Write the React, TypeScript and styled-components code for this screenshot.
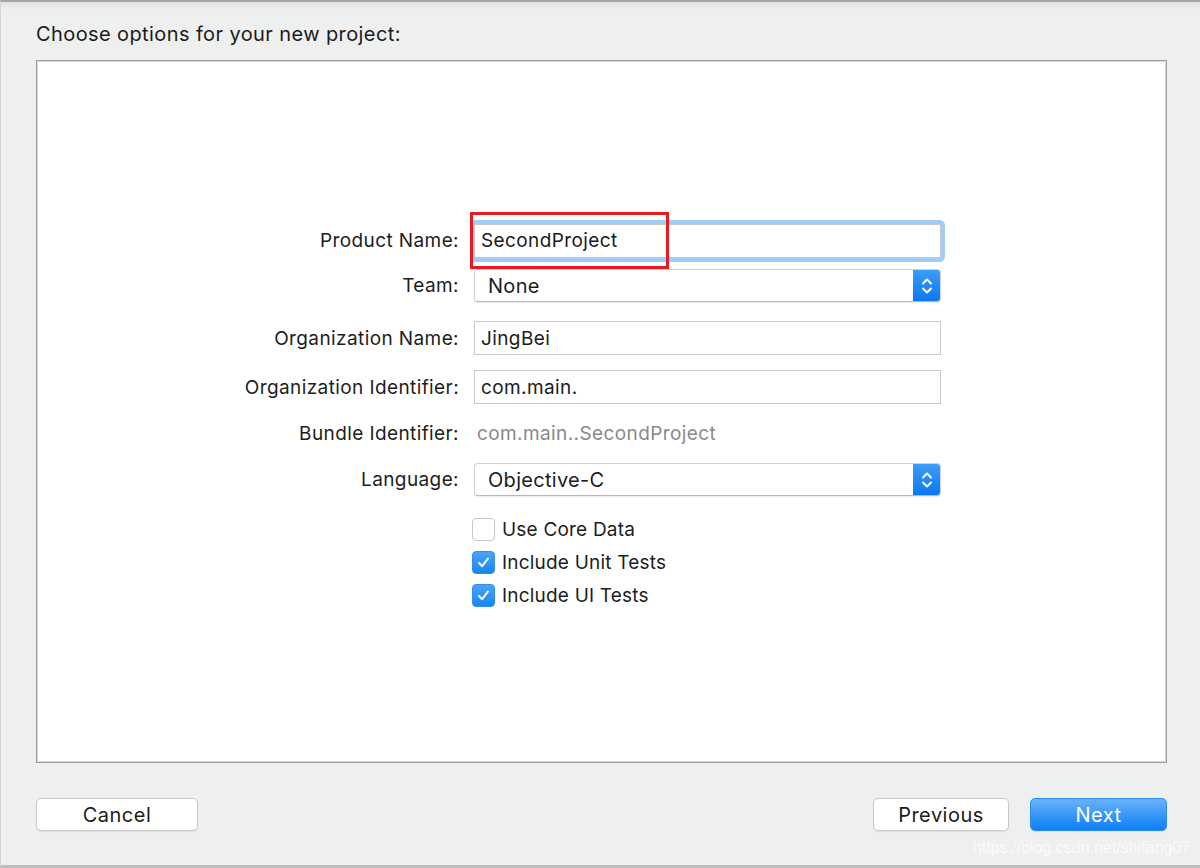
import styled, { createGlobalStyle } from 'styled-components';

const GlobalStyle = createGlobalStyle`
  html, body {
    margin: 0;
    padding: 0;
    background: #eeefef;
  }
  body {
    font-family: Inter, "Liberation Sans", Arial, sans-serif;
    color: #1b1b1b;
    -webkit-font-smoothing: antialiased;
  }
`;

const Window = styled.div`
  position: relative;
  width: 1200px;
  height: 868px;
  box-sizing: border-box;
  display: flex;
  flex-direction: column;
  padding: 20px 33px 0 35px;
  background: #eeefef;
  border-top: 2px solid #a7a7a7;
  border-left: 1px solid #d4d4d4;
  border-bottom: 3px solid #bdbdbd;
  background-image: linear-gradient(#e2e2e2, #eeefef 8px);
`;

const Title = styled.div`
  height: 24px;
  line-height: 24px;
  font-size: 20px;
  margin-bottom: 14px;
  letter-spacing: 0.4px;
`;

const Panel = styled.div`
  height: 703px;
  box-sizing: border-box;
  background: #fff;
  border: 1px solid #9d9d9d;
  box-shadow: inset 0 0 0 1px #d9d9d9;
  padding-top: 162px;
  display: flex;
  flex-direction: column;
`;

const Row = styled.div<{ $h: number; $mt?: number }>`
  display: grid;
  grid-template-columns: 422px 467px;
  column-gap: 15px;
  align-items: center;
  height: ${({ $h }) => $h}px;
  margin-top: ${({ $mt }) => $mt ?? 0}px;
`;

const Label = styled.div`
  text-align: right;
  font-size: 19px;
  letter-spacing: 0.4px;
  color: #1d1d1d;
`;

const TextField = styled.div<{ $focused?: boolean }>`
  position: relative;
  height: 34px;
  box-sizing: border-box;
  border: 1px solid #c9c9c9;
  background: #fff;
  display: flex;
  align-items: center;
  padding-left: 6px;
  font-size: 19px;
  letter-spacing: 0.4px;
  color: #1b1b1b;
  box-shadow: ${({ $focused }) => ($focused ? '0 0 0 4px #9fcdf6' : 'none')};
  border-radius: ${({ $focused }) => ($focused ? '2px' : '0')};
`;

const Highlight = styled.div`
  position: absolute;
  left: -5px;
  top: -13px;
  width: 199px;
  height: 57px;
  box-sizing: border-box;
  border: 3px solid #e81a22;
  pointer-events: none;
`;

const PlainValue = styled.div`
  font-size: 19px;
  letter-spacing: 0.4px;
  color: #8a8a8a;
  padding-left: 3px;
`;

const Popup = styled.div`
  height: 33px;
  box-sizing: border-box;
  display: flex;
  align-items: stretch;
  background: #fff;
  border-radius: 4px;
  border: 1px solid #d0d0d0;
  border-bottom-color: #b8b8b8;
  box-shadow: 0 1px 1px rgba(0, 0, 0, 0.08);
  overflow: hidden;
`;

const PopupText = styled.div`
  flex: 1;
  display: flex;
  align-items: center;
  padding-left: 13px;
  font-size: 20px;
  letter-spacing: 0.3px;
  color: #1b1b1b;
`;

const Stepper = styled.div`
  width: 27px;
  background: linear-gradient(#3c9df8, #0b78f3);
  display: flex;
  align-items: center;
  justify-content: center;
`;

const CheckRow = styled.label`
  display: flex;
  align-items: center;
  gap: 7px;
  margin-left: -2px;
  font-size: 19px;
  letter-spacing: 0.2px;
  color: #1d1d1d;
`;

const Box = styled.span<{ $checked?: boolean }>`
  width: 23px;
  height: 23px;
  box-sizing: border-box;
  border-radius: 4px;
  display: flex;
  align-items: center;
  justify-content: center;
  background: ${({ $checked }) => ($checked ? 'linear-gradient(#4aa3f7, #1787f2)' : '#fff')};
  border: 1px solid ${({ $checked }) => ($checked ? '#2f8ff0' : '#c6c6c6')};
`;

const Footer = styled.div`
  display: flex;
  align-items: center;
  margin-top: 35px;
  height: 33px;
`;

const Button = styled.button<{ $primary?: boolean; $w: number }>`
  width: ${({ $w }) => $w}px;
  height: 33px;
  border-radius: 5px;
  font-family: inherit;
  font-size: 20px;
  letter-spacing: 0.5px;
  cursor: default;
  color: ${({ $primary }) => ($primary ? '#fff' : '#1b1b1b')};
  background: ${({ $primary }) => ($primary ? 'linear-gradient(#6ab2fa, #0c7ff5)' : '#fff')};
  border: 1px solid ${({ $primary }) => ($primary ? '#2b8ef5' : '#c8c8c8')};
  box-shadow: 0 1px 1px rgba(0, 0, 0, 0.06);
  padding: 0;
`;

const Spacer = styled.div`
  flex: 1;
`;

const Watermark = styled.div`
  position: absolute;
  right: 10px;
  bottom: 8px;
  font-family: "Liberation Sans", Arial, sans-serif;
  font-size: 16px;
  color: rgba(255, 255, 255, 0.75);
`;

const StepperIcon = () => (
  <svg width="12" height="20" viewBox="0 0 12 20" fill="none">
    <path d="M2 7.5 L6 3.5 L10 7.5" stroke="#fff" strokeWidth="2" strokeLinecap="round" strokeLinejoin="round" />
    <path d="M2 12.5 L6 16.5 L10 12.5" stroke="#fff" strokeWidth="2" strokeLinecap="round" strokeLinejoin="round" />
  </svg>
);

const CheckIcon = () => (
  <svg width="15" height="15" viewBox="0 0 15 15" fill="none">
    <path d="M3 8 L6.2 11.2 L12 3.5" stroke="#fff" strokeWidth="2" strokeLinecap="round" strokeLinejoin="round" />
  </svg>
);

const Check = ({ label, checked }: { label: string; checked?: boolean }) => (
  <CheckRow>
    <Box $checked={checked}>{checked && <CheckIcon />}</Box>
    {label}
  </CheckRow>
);

export default function App() {
  return (
    <>
      <GlobalStyle />
      <Window>
        <Title>Choose options for your new project:</Title>
        <Panel>
          <Row $h={35}>
            <Label>Product Name:</Label>
            <TextField $focused>
              SecondProject
              <Highlight />
            </TextField>
          </Row>
          <Row $h={33} $mt={11}>
            <Label>Team:</Label>
            <Popup>
              <PopupText>None</PopupText>
              <Stepper>
                <StepperIcon />
              </Stepper>
            </Popup>
          </Row>
          <Row $h={34} $mt={19}>
            <Label>Organization Name:</Label>
            <TextField>JingBei</TextField>
          </Row>
          <Row $h={34} $mt={15}>
            <Label>Organization Identifier:</Label>
            <TextField>com.main.</TextField>
          </Row>
          <Row $h={30} $mt={14}>
            <Label>Bundle Identifier:</Label>
            <PlainValue>com.main..SecondProject</PlainValue>
          </Row>
          <Row $h={33} $mt={15}>
            <Label>Language:</Label>
            <Popup>
              <PopupText>Objective-C</PopupText>
              <Stepper>
                <StepperIcon />
              </Stepper>
            </Popup>
          </Row>
          <Row $h={23} $mt={22}>
            <span />
            <Check label="Use Core Data" />
          </Row>
          <Row $h={23} $mt={10}>
            <span />
            <Check label="Include Unit Tests" checked />
          </Row>
          <Row $h={23} $mt={10}>
            <span />
            <Check label="Include UI Tests" checked />
          </Row>
        </Panel>
        <Footer>
          <Button $w={162}>Cancel</Button>
          <Spacer />
          <Button $w={136}>Previous</Button>
          <Button $w={137} $primary style={{ marginLeft: 21 }}>
            Next
          </Button>
        </Footer>
        <Watermark>https://blog.csdn.net/shifang07</Watermark>
      </Window>
    </>
  );
}
